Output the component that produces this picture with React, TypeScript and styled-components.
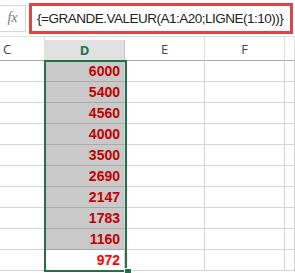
import React from 'react';
import styled, { createGlobalStyle } from 'styled-components';

const GlobalStyle = createGlobalStyle`
  html, body {
    margin: 0;
    padding: 0;
    background: #ffffff;
  }
  body {
    font-family: "Liberation Sans", Arial, sans-serif;
  }
`;

const values = [6000, 5400, 4560, 4000, 3500, 2690, 2147, 1783, 1160, 972];

const Page = styled.div`
  width: 295px;
  height: 273px;
  overflow: hidden;
  background: #ffffff;
`;

const FormulaBar = styled.div`
  display: flex;
  align-items: center;
  height: 37px;
  border-bottom: 1px solid #e3e3e3;
  box-sizing: border-box;
`;

const FxBox = styled.div`
  width: 26px;
  height: 27px;
  box-sizing: border-box;
  border: 1px solid #d6d6d6;
  border-left: none;
  display: flex;
  align-items: center;
  justify-content: center;
  font-family: "Liberation Serif", "Times New Roman", serif;
  font-style: italic;
  font-size: 14px;
  color: #7a7a7a;
  margin-right: 3px;
`;

const FormulaInput = styled.div`
  width: 264px;
  height: 31px;
  box-sizing: border-box;
  border: 3px solid #e04545;
  display: flex;
  align-items: center;
  padding-left: 5px;
  font-family: "Liberation Sans", Arial, sans-serif;
  font-size: 13.5px;
  letter-spacing: -0.5px;
  color: #222222;
  white-space: nowrap;
  overflow: hidden;
`;

const Sheet = styled.div`
  position: relative;
  display: grid;
  grid-template-columns: 45px 80px 80px 80px 10px;
  grid-auto-rows: 21px;
  grid-template-rows: 24px;
`;

const HeadCell = styled.div<{ $active?: boolean }>`
  box-sizing: border-box;
  display: flex;
  align-items: center;
  justify-content: center;
  border-bottom: 1px solid #ababab;
  border-right: 1px solid ${(p) => (p.$active ? '#c6c6c6' : '#e1e1e1')};
  background: ${(p) => (p.$active ? '#e1e1e1' : '#ffffff')};
  margin-top: ${(p) => (p.$active ? '3px' : '0')};
  font-family: "Open Sans", "Liberation Sans", sans-serif;
  font-size: 13px;
  font-weight: ${(p) => (p.$active ? 700 : 400)};
  color: ${(p) => (p.$active ? '#217346' : '#444444')};
`;

const LeftHead = styled(HeadCell)`
  justify-content: flex-start;
  padding-left: 3px;
`;

const Cell = styled.div<{ $filled?: boolean; $bright?: boolean }>`
  box-sizing: border-box;
  border-right: 1px solid #d4d4d4;
  border-bottom: 1px solid ${(p) => (p.$filled ? '#a8a8a8' : '#d4d4d4')};
  background: ${(p) => (p.$filled ? '#c9c9c9' : '#ffffff')};
  display: flex;
  align-items: center;
  justify-content: flex-end;
  padding-right: 4px;
  font-family: "Liberation Sans", Arial, sans-serif;
  font-weight: 700;
  font-size: 14px;
  color: ${(p) => (p.$bright ? '#ff0000' : '#c00000')};
`;

const Selection = styled.div`
  position: absolute;
  left: 44px;
  top: 23px;
  width: 83px;
  height: 212px;
  box-sizing: border-box;
  border: 2px solid #217346;
  pointer-events: none;
`;

const FillHandle = styled.div`
  position: absolute;
  left: 124px;
  top: 231px;
  width: 6px;
  height: 6px;
  background: #217346;
  border: 1px solid #ffffff;
`;

export default function App() {
  return (
    <Page>
      <GlobalStyle />
      <FormulaBar>
        <FxBox>fx</FxBox>
        <FormulaInput>{'{=GRANDE.VALEUR(A1:A20;LIGNE(1:10))}'}</FormulaInput>
      </FormulaBar>
      <Sheet>
        <LeftHead>C</LeftHead>
        <HeadCell $active>D</HeadCell>
        <HeadCell>E</HeadCell>
        <HeadCell>F</HeadCell>
        <HeadCell />
        {values.map((v, i) => (
          <React.Fragment key={v}>
            <Cell />
            <Cell $filled={i < 9} $bright={i === 9}>
              {v}
            </Cell>
            <Cell />
            <Cell />
            <Cell />
          </React.Fragment>
        ))}
        <Selection />
        <FillHandle />
      </Sheet>
    </Page>
  );
}
